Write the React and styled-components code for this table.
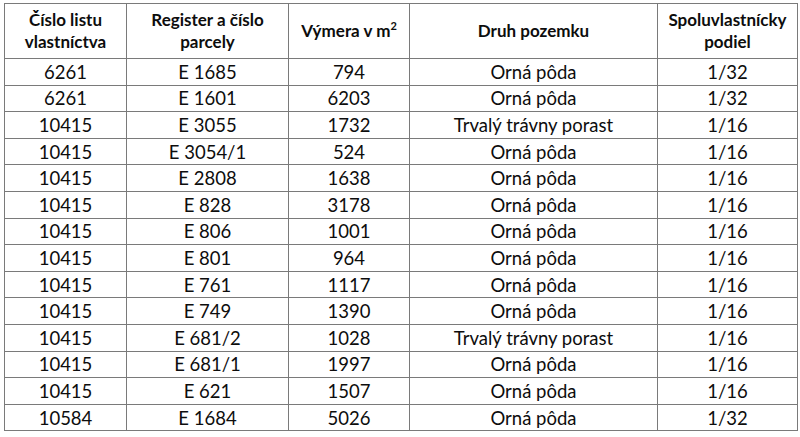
import React from 'react'
import styled, { createGlobalStyle } from 'styled-components'

const GlobalStyle = createGlobalStyle`
  body {
    margin: 0;
    background: #fff;
  }
`

const Page = styled.div`
  padding: 3px 0 0 4px;
  font-family: Lato, "Open Sans", sans-serif;
  color: #0d0d0d;
`

const Grid = styled.table`
  border-collapse: collapse;
  table-layout: fixed;
  width: 793px;
`

const HeadCell = styled.th`
  border: 1px solid #7a7a7a;
  height: 54px;
  padding: 0 2px;
  font-size: 17px;
  font-weight: 700;
  line-height: 22px;
  text-align: center;
  vertical-align: middle;
`

const Cell = styled.td`
  border: 1px solid #7a7a7a;
  height: 25.6px;
  padding: 0 2px;
  font-size: 18.5px;
  line-height: 20px;
  text-align: center;
  vertical-align: middle;
`

const Sup = styled.sup`
  font-size: 11px;
  vertical-align: 7px;
  line-height: 0;
`

const widths = [122, 162, 121, 248, 140]

const rows = [
  ['6261', 'E 1685', '794', 'Orná pôda', '1/32'],
  ['6261', 'E 1601', '6203', 'Orná pôda', '1/32'],
  ['10415', 'E 3055', '1732', 'Trvalý trávny porast', '1/16'],
  ['10415', 'E 3054/1', '524', 'Orná pôda', '1/16'],
  ['10415', 'E 2808', '1638', 'Orná pôda', '1/16'],
  ['10415', 'E 828', '3178', 'Orná pôda', '1/16'],
  ['10415', 'E 806', '1001', 'Orná pôda', '1/16'],
  ['10415', 'E 801', '964', 'Orná pôda', '1/16'],
  ['10415', 'E 761', '1117', 'Orná pôda', '1/16'],
  ['10415', 'E 749', '1390', 'Orná pôda', '1/16'],
  ['10415', 'E 681/2', '1028', 'Trvalý trávny porast', '1/16'],
  ['10415', 'E 681/1', '1997', 'Orná pôda', '1/16'],
  ['10415', 'E 621', '1507', 'Orná pôda', '1/16'],
  ['10584', 'E 1684', '5026', 'Orná pôda', '1/32'],
]

export default function App() {
  return (
    <Page>
      <GlobalStyle />
      <Grid>
        <colgroup>
          {widths.map((w, i) => <col key={i} style={{ width: w }} />)}
        </colgroup>
        <thead>
          <tr>
            <HeadCell>Číslo listu<br />vlastníctva</HeadCell>
            <HeadCell>Register a číslo<br />parcely</HeadCell>
            <HeadCell>Výmera v m<Sup>2</Sup></HeadCell>
            <HeadCell>Druh pozemku</HeadCell>
            <HeadCell>Spoluvlastnícky<br />podiel</HeadCell>
          </tr>
        </thead>
        <tbody>
          {rows.map((row, i) => (
            <tr key={i}>
              {row.map((v, j) => <Cell key={j}>{v}</Cell>)}
            </tr>
          ))}
        </tbody>
      </Grid>
    </Page>
  )
}
